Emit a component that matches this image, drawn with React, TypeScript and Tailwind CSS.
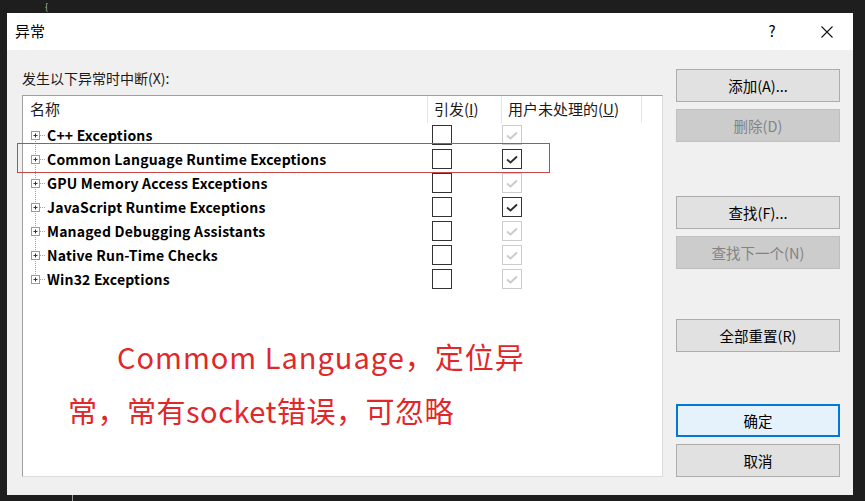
import React from 'react';

const ui = 'font-[family-name:Segoe_UI,Noto_Sans_CJK_SC,sans-serif]';

interface Row {
  name: string;
  userChecked: boolean;
  userEnabled: boolean;
}

const rows: Row[] = [
  { name: 'C++ Exceptions', userChecked: true, userEnabled: false },
  { name: 'Common Language Runtime Exceptions', userChecked: true, userEnabled: true },
  { name: 'GPU Memory Access Exceptions', userChecked: true, userEnabled: false },
  { name: 'JavaScript Runtime Exceptions', userChecked: true, userEnabled: true },
  { name: 'Managed Debugging Assistants', userChecked: true, userEnabled: false },
  { name: 'Native Run-Time Checks', userChecked: true, userEnabled: false },
  { name: 'Win32 Exceptions', userChecked: true, userEnabled: false },
];

function TreeGlyph({ first, last }: { first: boolean; last: boolean }) {
  return (
    <svg width="18" height="24" viewBox="0 0 18 24" className="shrink-0">
      {!first && <line x1="8.5" y1="0" x2="8.5" y2="8" stroke="#a0a0a0" strokeDasharray="1 1" />}
      {!last && <line x1="8.5" y1="16" x2="8.5" y2="24" stroke="#a0a0a0" strokeDasharray="1 1" />}
      <line x1="13" y1="12.5" x2="18" y2="12.5" stroke="#a0a0a0" strokeDasharray="1 1" />
      <rect x="4.5" y="8.5" width="8" height="8" fill="#fff" stroke="#9a9a9a" />
      <line x1="6.5" y1="12.5" x2="10.5" y2="12.5" stroke="#333" />
      <line x1="8.5" y1="10.5" x2="8.5" y2="14.5" stroke="#333" />
    </svg>
  );
}

function Check({ checked, enabled }: { checked: boolean; enabled: boolean }) {
  const stroke = enabled ? '#2a2a2a' : '#c8c8c8';
  return (
    <div
      className={`w-[20px] h-[20px] border flex items-center justify-center bg-white ${
        enabled ? 'border-[#333333]' : 'border-[#cccccc]'
      }`}
    >
      {checked && (
        <svg width="14" height="14" viewBox="0 0 14 14">
          <path d="M2 7.5 L5.5 10.5 L12 4.5" fill="none" stroke={stroke} strokeWidth="1.8" />
        </svg>
      )}
    </div>
  );
}

function Button({
  label,
  disabled,
  primary,
  className = '',
}: {
  label: string;
  disabled?: boolean;
  primary?: boolean;
  className?: string;
}) {
  let look = 'bg-[#e1e1e1] border border-[#adadad] text-black';
  if (disabled) look = 'bg-[#cccccc] border border-[#bfbfbf] text-[#838383]';
  if (primary) look = 'bg-[#e5f1fb] border-2 border-[#0078d7] text-black';
  return (
    <div className={`h-[33px] w-[164px] flex items-center justify-center text-[14.5px] ${look} ${className}`}>
      {label}
    </div>
  );
}

export default function App() {
  return (
    <div className={`relative w-[865px] h-[501px] bg-[#1e1e1e] overflow-hidden pt-[13px] pl-[7px] ${ui}`}>
      <span className="absolute left-[45px] top-[1px] text-[9px] leading-[11px] text-[#bbbbbb]">{'{'}</span>
      <div className="absolute left-[72px] top-[495px] w-px h-[6px] bg-[#9a9a9a]" />

      <div className="w-[846px] h-[482px] flex flex-col bg-[#f0f0f0]">
        <div className="h-[37px] bg-white flex items-center pl-[8px] pr-[20px] text-[15px] text-black">
          <span className="flex-1">异常</span>
          <span className="w-[16px] text-center text-[15px] mr-[41px]">?</span>
          <svg width="12" height="12" viewBox="0 0 12 12">
            <path d="M0.5 0.5 L11.5 11.5 M11.5 0.5 L0.5 11.5" stroke="#111" strokeWidth="1.1" />
          </svg>
        </div>

        <div className="flex-1 flex">
          <div className="w-[656px] pl-[15px] pt-[19px] pb-[18px] flex flex-col">
            <div className="h-[18px] leading-[18px] text-[14px] text-[#1a1a1a]">发生以下异常时中断(X):</div>
            <div className="relative mt-[8px] flex-1 bg-white border-t border-l border-[#a0a0a0] border-r-[#dcdcdc] border-b-[#dcdcdc] border-r border-b">
              <div className="flex h-[27px] text-[15px] text-[#1a1a1a]">
                <div className="w-[405px] pl-[7px] flex items-center border-r border-[#e5e5e5]">名称</div>
                <div className="w-[74px] pl-[6px] flex items-center border-r border-[#e5e5e5]">
                  引发(<span className="underline">I</span>)
                </div>
                <div className="w-[140px] pl-[6px] flex items-center border-r border-[#e5e5e5]">
                  用户未处理的(<span className="underline">U</span>)
                </div>
              </div>

              <div className="flex flex-col">
                {rows.map((r, i) => (
                  <div key={r.name} className="flex h-[24px] items-center">
                    <div className="w-[405px] flex items-center pl-[4px]">
                      <TreeGlyph first={i === 0} last={i === rows.length - 1} />
                      <span className="ml-[2px] text-[14px] font-bold text-black whitespace-nowrap tracking-[0.2px]">
                        {r.name}
                      </span>
                    </div>
                    <div className="w-[74px] pl-[4px]">
                      <Check checked={false} enabled={true} />
                    </div>
                    <div className="w-[140px]">
                      <Check checked={r.userChecked} enabled={r.userEnabled} />
                    </div>
                  </div>
                ))}
              </div>

              <div className="absolute left-[-6px] top-[47px] w-[533px] h-[30px] border border-[#c84848]" />

              <div className="absolute left-[94px] top-[242px] text-[29px] leading-[36px] tracking-[1px] text-[#e0282a] whitespace-nowrap">
                Commom Language，定位异
              </div>
              <div className="absolute left-[45px] top-[296px] text-[29px] leading-[36px] tracking-[0.5px] text-[#e0282a] whitespace-nowrap">
                常，常有socket错误，可忽略
              </div>
            </div>
          </div>

          <div className="ml-[13px] pt-[19px] flex flex-col">
            <Button label="添加(A)..." />
            <Button label="删除(D)" disabled className="mt-[7px]" />
            <Button label="查找(F)..." className="mt-[54px]" />
            <Button label="查找下一个(N)" disabled className="mt-[7px]" />
            <Button label="全部重置(R)" className="mt-[50px]" />
            <Button label="确定" primary className="mt-[52px]" />
            <Button label="取消" className="mt-[7px]" />
          </div>
        </div>
      </div>
    </div>
  );
}
